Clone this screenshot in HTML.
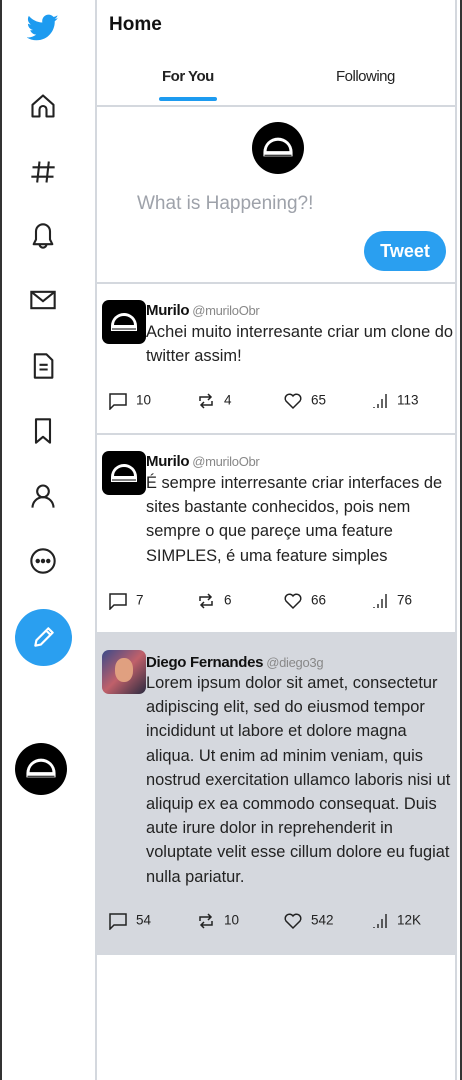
<!DOCTYPE html><html><head><style>
*{box-sizing:border-box;margin:0;padding:0}
body{width:462px;height:1080px;background:#fff;font-family:"Liberation Sans",sans-serif;position:relative;overflow:hidden;color:#111}
.abs{position:absolute}
.ic{position:absolute;left:29px;width:28px;height:28px}
.main{position:absolute;left:95px;top:0;width:362px;height:1080px;border-left:2px solid #d4d8de;border-right:2px solid #d4d8de}
.tw{position:absolute;left:0;width:358px;border-bottom:2px solid #d4d8de}
.av{position:absolute;left:5px;width:44px;height:44px;border-radius:7px;background:#000;overflow:hidden}
.nm{position:absolute;left:49px;font-size:15px;font-weight:bold;letter-spacing:-0.3px}
.nm span{font-weight:normal;color:#888;font-size:13px;margin-left:3px}
.tx{position:absolute;left:49px;width:312px;font-size:16.4px;line-height:24.2px;color:#222}
.act{position:absolute;left:11px;font-size:13.5px;color:#222}
.act div{position:absolute;top:0;white-space:nowrap}
.act svg{vertical-align:middle;margin-right:8px}
</style></head><body>
<div class="abs" style="left:0;top:0;width:2px;height:1080px;background:#333"></div>
<div class="abs" style="left:460px;top:0;width:2px;height:1080px;background:#333"></div>
<svg class="abs" style="left:27px;top:14px" width="32" height="28" viewBox="0 0 24 20"><path fill="#1d9bf0" d="M23.6 2.4c-.9.4-1.8.6-2.8.8 1-.6 1.8-1.6 2.1-2.7-1 .6-2 1-3.1 1.2C18.9.6 17.6 0 16.2 0c-2.7 0-4.8 2.200-4.800 4.800 0 .4 0 .8.1 1.1C7.4 5.7 3.8 3.8 1.4.9c-.4.7-.7 1.6-.7 2.4 0 1.7.9 3.2 2.2 4-.8 0-1.5-.2-2.2-.6v.1c0 2.3 1.7 4.3 3.9 4.7-.4.1-.8.2-1.3.2-.3 0-.6 0-.9-.1.6 1.900 2.400 3.300 4.500 3.400-1.7 1.3-3.7 2.1-6 2.1-.4 0-.8 0-1.2-.1 2.1 1.4 4.7 2.2 7.4 2.2 8.9 0 13.7-7.4 13.7-13.7v-.6c.9-.7 1.8-1.5 2.4-2.5z"/></svg>
<svg class="ic" style="top:92px" viewBox="0 0 24 24" fill="none" stroke="#222" stroke-width="1.8" stroke-linejoin="round"><path d="M3 11l9-8 9 8v10h-6v-6a3 3 0 0 0-6 0v6H3z"/></svg>
<svg class="ic" style="top:158px" viewBox="0 0 24 24" fill="none" stroke="#222" stroke-width="1.8"><path d="M9 3L7 21M17 3l-2 18M3 8h19M2 16h19"/></svg>
<svg class="ic" style="top:222px" viewBox="0 0 24 24" fill="none" stroke="#222" stroke-width="1.8" stroke-linejoin="round"><path d="M12 2a6 6 0 0 0-6 6v7l-2 4h16l-2-4V8a6 6 0 0 0-6-6zM9 19a3 3 0 0 0 6 0"/></svg>
<svg class="ic" style="top:286px" viewBox="0 0 24 24" fill="none" stroke="#222" stroke-width="1.8"><rect x="2" y="5" width="20" height="14"/><path d="M2 5l10 8 10-8"/></svg>
<svg class="ic" style="top:352px" viewBox="0 0 24 24" fill="none" stroke="#222" stroke-width="1.8" stroke-linejoin="round"><path d="M5 2h10l5 5v15H5zM9 11h7M9 15h7"/></svg>
<svg class="ic" style="top:417px" viewBox="0 0 24 24" fill="none" stroke="#222" stroke-width="1.8" stroke-linejoin="round"><path d="M6 2h12v20l-6-5-6 5z"/></svg>
<svg class="ic" style="top:482px" viewBox="0 0 24 24" fill="none" stroke="#222" stroke-width="1.8"><circle cx="12" cy="8" r="5"/><path d="M3 22a9 9 0 0 1 18 0"/></svg>
<svg class="ic" style="top:547px" viewBox="0 0 24 24" fill="none" stroke="#222" stroke-width="1.8"><circle cx="12" cy="12" r="10"/><circle cx="7.5" cy="12" r="1" fill="#222"/><circle cx="12" cy="12" r="1" fill="#222"/><circle cx="16.5" cy="12" r="1" fill="#222"/></svg>
<div class="abs" style="left:15px;top:609px;width:57px;height:57px;border-radius:50%;background:#2a9ff0"></div>
<svg class="abs" style="left:31px;top:624px" width="26" height="26" viewBox="0 0 24 24" fill="none" stroke="#fff" stroke-width="2" stroke-linejoin="round"><path d="M4 20l1-5L16 4l4 4L9 19zM14 6l4 4"/></svg>
<svg class="abs" style="left:15px;top:743px" width="52" height="52" viewBox="0 0 50 50"><circle cx="25" cy="25" r="25" fill="#000"/><path d="M11 29a14 14 0 0 1 28 0v4H11z" fill="#fff"/><path d="M14 28a11 10 0 0 1 22 0z" fill="#000"/><path d="M12 32h26M13 35h24" stroke="#000" stroke-width="1"/></svg>
<div class="main">
<div class="abs" style="left:12px;top:14px;font-size:19px;font-weight:bold">Home</div>
<div class="abs" style="left:65px;top:68px;font-size:15px;letter-spacing:-0.5px;font-weight:bold;color:#222">For You</div>
<div class="abs" style="left:62px;top:97px;width:58px;height:4px;border-radius:2px;background:#1d9bf0"></div>
<div class="abs" style="left:239px;top:68px;font-size:15px;letter-spacing:-0.5px;color:#222">Following</div>
<div class="abs" style="left:0;top:105px;width:358px;height:2px;background:#d4d8de"></div>
<svg class="abs" style="left:155px;top:122px" width="52" height="52" viewBox="0 0 50 50"><circle cx="25" cy="25" r="25" fill="#000"/><path d="M11 29a14 14 0 0 1 28 0v4H11z" fill="#fff"/><path d="M14 28a11 10 0 0 1 22 0z" fill="#000"/><path d="M12 32h26M13 35h24" stroke="#000" stroke-width="1"/></svg>
<div class="abs" style="left:40px;top:193px;font-size:19px;color:#9ea2aa">What is Happening?!</div>
<div class="abs" style="left:267px;top:231px;width:82px;height:40px;border-radius:20px;background:#2a9ff0;color:#fff;font-weight:bold;font-size:18px;text-align:center;line-height:40px">Tweet</div>
<div class="abs" style="left:0;top:282px;width:358px;height:2px;background:#d4d8de"></div>

<div class="tw" style="top:284px;height:151px">
<div class="av" style="top:16px"><svg width="44" height="44" viewBox="0 0 44 44"><path d="M9 26a13 13 0 0 1 26 0v5H9z" fill="#fff"/><path d="M12 25a10 9 0 0 1 20 0z" fill="#000"/><path d="M10 29h24M11 32h22" stroke="#000"/></svg></div>
<div class="nm" style="top:18px">Murilo<span>@muriloObr</span></div>
<div class="tx" style="top:36px">Achei muito interresante criar um clone do twitter assim!</div>
<div class="act" style="top:108px">
<div style="left:0"><svg width="20" height="18" viewBox="0 0 20 18" fill="none" stroke="#222" stroke-width="1.5"><path d="M2 2h16v11H6l-4 4z"/></svg>10</div>
<div style="left:88px"><svg width="20" height="18" viewBox="0 0 20 18" fill="none" stroke="#222" stroke-width="1.5"><path d="M4 9V5h11M12 2l3 3-3 3M16 9v4H5M8 16l-3-3 3-3"/></svg>4</div>
<div style="left:175px"><svg width="20" height="18" viewBox="0 0 20 18" fill="none" stroke="#222" stroke-width="1.5"><path d="M10 16L3 9a4 4 0 0 1 7-5 4 4 0 0 1 7 5z"/></svg>65</div>
<div style="left:263px"><svg width="18" height="18" viewBox="0 0 18 18" stroke="#222" stroke-width="1.4"><path d="M3 16v-1M7 16v-4M11 16V7M15 16V2"/></svg>113</div>
</div></div>

<div class="tw" style="top:435px;height:199px">
<div class="av" style="top:16px"><svg width="44" height="44" viewBox="0 0 44 44"><path d="M9 26a13 13 0 0 1 26 0v5H9z" fill="#fff"/><path d="M12 25a10 9 0 0 1 20 0z" fill="#000"/><path d="M10 29h24M11 32h22" stroke="#000"/></svg></div>
<div class="nm" style="top:18px">Murilo<span>@muriloObr</span></div>
<div class="tx" style="top:36px">É sempre interresante criar interfaces de sites bastante conhecidos, pois nem sempre o que pareçe uma feature SIMPLES, é uma feature simples</div>
<div class="act" style="top:157px">
<div style="left:0"><svg width="20" height="18" viewBox="0 0 20 18" fill="none" stroke="#222" stroke-width="1.5"><path d="M2 2h16v11H6l-4 4z"/></svg>7</div>
<div style="left:88px"><svg width="20" height="18" viewBox="0 0 20 18" fill="none" stroke="#222" stroke-width="1.5"><path d="M4 9V5h11M12 2l3 3-3 3M16 9v4H5M8 16l-3-3 3-3"/></svg>6</div>
<div style="left:175px"><svg width="20" height="18" viewBox="0 0 20 18" fill="none" stroke="#222" stroke-width="1.5"><path d="M10 16L3 9a4 4 0 0 1 7-5 4 4 0 0 1 7 5z"/></svg>66</div>
<div style="left:263px"><svg width="18" height="18" viewBox="0 0 18 18" stroke="#222" stroke-width="1.4"><path d="M3 16v-1M7 16v-4M11 16V7M15 16V2"/></svg>76</div>
</div></div>

<div class="tw" style="top:634px;height:321px;background:#d5d8de">
<div class="av" style="top:16px;background:linear-gradient(135deg,#3a4a8a,#c0606a 50%,#2a2a40)"><div style="position:absolute;left:13px;top:8px;width:18px;height:24px;border-radius:45%;background:#e0a080"></div></div>
<div class="nm" style="top:20px">Diego Fernandes<span>@diego3g</span></div>
<div class="tx" style="top:37px">Lorem ipsum dolor sit amet, consectetur adipiscing elit, sed do eiusmod tempor incididunt ut labore et dolore magna aliqua. Ut enim ad minim veniam, quis nostrud exercitation ullamco laboris nisi ut aliquip ex ea commodo consequat. Duis aute irure dolor in reprehenderit in voluptate velit esse cillum dolore eu fugiat nulla pariatur.</div>
<div class="act" style="top:278px">
<div style="left:0"><svg width="20" height="18" viewBox="0 0 20 18" fill="none" stroke="#222" stroke-width="1.5"><path d="M2 2h16v11H6l-4 4z"/></svg>54</div>
<div style="left:88px"><svg width="20" height="18" viewBox="0 0 20 18" fill="none" stroke="#222" stroke-width="1.5"><path d="M4 9V5h11M12 2l3 3-3 3M16 9v4H5M8 16l-3-3 3-3"/></svg>10</div>
<div style="left:175px"><svg width="20" height="18" viewBox="0 0 20 18" fill="none" stroke="#222" stroke-width="1.5"><path d="M10 16L3 9a4 4 0 0 1 7-5 4 4 0 0 1 7 5z"/></svg>542</div>
<div style="left:263px"><svg width="18" height="18" viewBox="0 0 18 18" stroke="#222" stroke-width="1.4"><path d="M3 16v-1M7 16v-4M11 16V7M15 16V2"/></svg>12K</div>
</div></div>
</div>
</body></html>
